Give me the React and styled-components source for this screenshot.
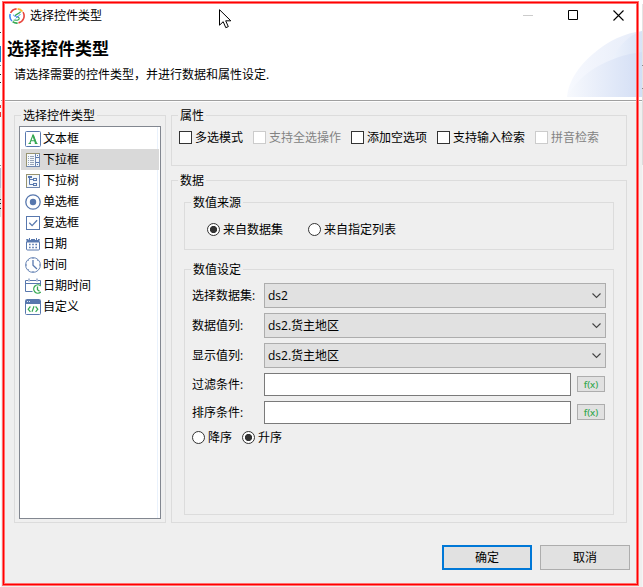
import React from "react";
import styled, { createGlobalStyle, css } from "styled-components";

const Global = createGlobalStyle`
  * { box-sizing: border-box; }
  body {
    margin: 0;
    background: #f0f0f0;
    overflow: hidden;
    font: 12px/16px "Open Sans", "Noto Sans CJK SC", sans-serif;
    color: #000;
  }
`;

const Page = styled.div`
  position: relative;
  width: 643px;
  height: 587px;
  display: grid;
  grid-template-columns: 1px 641px 1px;
  background: #efefef;
`;

const LeftEdge = styled.div`
  height: 587px;
  background: linear-gradient(
    #fff 32px, #333 32px 33px, #fff 33px 46px, #1887c9 46px 62px, #fff 62px 65px,
    #777 65px 66px, #fff 66px 74px, #222 74px 75px, #fff 75px 82px, #222 82px 83px,
    #fff 83px 105px, #e33 105px 108px, #fff 108px 112px, #e33 112px 117px, #fff 117px 165px,
    #888 165px 166px, #fff 166px 168px, #b5bcd0 168px 188px, #ddd 188px 199px, #222 199px 200px,
    #ddd 200px 203px, #222 203px 204px, #ddd 204px 208px, #222 208px 209px, #ddd 209px 217px, #fff 217px
  );
`;

const RightEdge = styled.div`
  height: 587px;
  background: linear-gradient(
    #fff 4px, #e4e4e4 4px 65px, #888 65px 66px, #e4e4e4 66px 88px, #888 88px 89px,
    #dcdcdc 89px 165px, #f5f5f5 165px
  );
`;

const Dialog = styled.div`
  display: flex;
  flex-direction: column;
  height: 587px;
`;

const Header = styled.header`
  display: grid;
  grid-template-columns: 1fr 75px;
  grid-template-rows: 31px 66px;
  height: 102px;
  flex: none;
  background: #fff;
  border-bottom: 1px solid #fdfdfd;
  box-shadow: inset 0 -1px 0 #a0a0a0;
`;

const TitleBar = styled.div`
  grid-column: 1 / -1;
  display: flex;
  align-items: center;
  padding: 0 18px 0 8px;
`;

const Caption = styled.span`
  flex: 1;
  margin-left: 5px;
`;

const Controls = styled.div`
  display: flex;
  align-items: center;
  gap: 34px;

  svg { display: block; }
`;

const Intro = styled.div`
  padding: 7px 0 0 6px;
`;

const Heading = styled.h1`
  margin: 0;
  font-size: 17px;
  line-height: 22px;
  font-weight: 700;
`;

const Hint = styled.p`
  margin: 7px 0 0 7px;
`;

const Content = styled.main`
  display: grid;
  grid-template-columns: 152px 456px;
  column-gap: 5px;
  height: 408px;
  margin: 13px 0 0 13px;
`;

const RightColumn = styled.div`
  display: grid;
  grid-template-rows: 51px 343px;
  row-gap: 14px;
`;

const Group = styled.section`
  border: 1px solid #dcdcdc;
  padding: ${(p) => p.$pad || "0"};
  height: ${(p) => p.$height || "auto"};
  margin: ${(p) => p.$margin || "0"};
`;

const Legend = styled.h2`
  width: max-content;
  height: 16px;
  margin: -8px 0 -1px ${(p) => p.$left || 2}px;
  padding: 0 2px;
  background: #efefef;
  font: inherit;
`;

const List = styled.ul`
  list-style: none;
  height: 393px;
  width: 142px;
  margin: 3px 0 0;
  padding: 1px;
  background: #fff;
  border: 1px solid #828790;
  box-shadow: inset -2px 0 0 #fff, inset -3px 0 0 #eaf2fc;
`;

const Item = styled.li`
  display: flex;
  align-items: center;
  gap: 2px;
  height: 21px;
  width: 138px;
  padding-left: 4px;
  background: ${(p) => (p.$selected ? "#d9d9d9" : "transparent")};

  svg { display: block; flex: none; }
`;

const OptionRow = styled.div`
  display: flex;
  align-items: center;
  gap: ${(p) => p.$gap}px;
  height: 16px;
  margin: ${(p) => p.$margin};
`;

const Option = styled.label`
  display: flex;
  align-items: center;
  gap: 3px;
  white-space: nowrap;
  color: ${(p) => (p.$disabled ? "#838383" : "#000")};
`;

const Box = styled.span`
  width: 13px;
  height: 13px;
  margin-bottom: 1px;
  background: #fff;
  border: 1px solid ${(p) => (p.$disabled ? "#ccc" : "#333")};
`;

const Dot = styled.span`
  width: 13px;
  height: 13px;
  margin-bottom: 1px;
  border-radius: 50%;
  background: #fff;
  border: 1px solid #333;
  ${(p) => p.$on && css`
    background: radial-gradient(circle, #333 3.2px, #fff 4px);
  `}
`;

const Fields = styled.div`
  display: grid;
  grid-template-columns: 72px 307px 28px;
  grid-template-rows: 25px 25px 25px 23px 23px;
  row-gap: 5px;
  column-gap: 0;
  align-items: center;
  margin: 6px 0 0 7px;
`;

const Select = styled.div`
  grid-column: 2 / -1;
  display: flex;
  align-items: center;
  justify-content: space-between;
  width: 342px;
  height: 25px;
  padding: 0 4px 0 3px;
  background: #e1e1e1;
  border: 1px solid #adadad;
`;

const Input = styled.input`
  width: 307px;
  height: 23px;
  padding: 0 4px;
  border: 1px solid #7a7a7a;
  background: #fff;
  outline: 0;
  font: inherit;
`;

const FxButton = styled.button`
  width: 28px;
  height: 16px;
  margin: 0 0 1px 6px;
  padding: 0;
  border: 1px solid #adadad;
  background: #e1e1e1;
  color: #36a852;
  font: 500 9.5px/13px "Noto Sans", sans-serif;
`;

const Footer = styled.footer`
  display: flex;
  justify-content: flex-end;
  gap: 8px;
  margin: 22px 12px 0 0;
`;

const Button = styled.button`
  width: 90px;
  height: 25px;
  padding: 0;
  background: #e1e1e1;
  border: ${(p) => (p.$primary ? "2px solid #0078d7" : "1px solid #adadad")};
  color: #000;
  font: inherit;
`;

const Frame = styled.div`
  position: absolute;
  left: 2px;
  top: 1px;
  width: 637px;
  height: 585px;
  border: 1px solid #ff7070;
  pointer-events: none;

  &::before {
    content: "";
    display: block;
    box-sizing: border-box;
    height: 583px;
    border: 1px solid #f00;
    box-shadow: inset 0 0 0 1px #ff7070;
  }
`;

const Pointer = styled.svg`
  position: absolute;
  left: 219px;
  top: 9px;
`;

const Icon = ({ children }) => (
  <svg width="16" height="16" viewBox="0 0 16 16" fill="none" stroke="#5878ae" strokeWidth="1">
    {children}
  </svg>
);

const Logo = () => (
  <svg width="16" height="16" viewBox="0 0 16 16" fill="none" strokeWidth="1.6">
    <path d="M1.6 5A7.1 7.1 0 0 1 7.6 .9" stroke="#e8453c" />
    <path d="M8.6 .9A7.1 7.1 0 0 1 13.5 3.5" stroke="#f9bb2d" />
    <path d="M14 4.2A7.1 7.1 0 0 1 9.5 14.9" stroke="#e8453c" />
    <path d="M8.6 15.1A7.1 7.1 0 0 1 3.6 13.6" stroke="#34a853" />
    <path d="M3 13A7.1 7.1 0 0 1 1.2 6" stroke="#4285f4" />
    <path d="M11.6 3.6C10.2 6.2 6.6 5.6 6 8.2" stroke="#34a853" strokeWidth="1.2" />
    <path d="M8.2 8.6c2.2.4 2.8 2.6.8 3.4-1.8.7-3.4-.6-4.4.4" stroke="#34a853" strokeWidth="1.1" />
    <path d="M4.6 6.6c-.8 2 3 1.6 4 2.6M6.8 10.4c1.2-2.4 3.6-2 4.6-4.4" stroke="#4285f4" strokeWidth=".9" />
  </svg>
);

const icons = {
  text: (
    <Icon>
      <rect x=".5" y=".5" width="15" height="15" rx="1" fill="#fff" />
      <path d="M4.7 12.5 8 4l3.3 8.5M5.8 9.7h4.5M3.5 12.5H6M9.8 12.5h2.7" stroke="#36a852" strokeWidth="1.1" />
      <path d="m8 4 3 8.5" stroke="#36a852" strokeWidth="1.8" />
    </Icon>
  ),
  select: (
    <Icon>
      <rect x="1.5" y="1.5" width="13" height="13" fill="#f4f8fb" stroke="#99946f" />
      <path d="M1.5 14.5h13v-13M10.5 1.5v13" stroke="#6f88b2" />
      <path d="M3 4.5h1M3 6.5h1M3 8.5h1M3 10.5h1M3 12.5h1M5 4.5h4M5 6.5h4M5 8.5h4M5 10.5h4M5 12.5h4" stroke="#98a5b8" />
      <path d="M11 5.5h3M11 10.5h3M12 3.5h1M12 12.5h1" />
    </Icon>
  ),
  tree: (
    <Icon>
      <rect x="1.5" y="1.5" width="13" height="13" fill="#f4f8fb" stroke="#99946f" />
      <path d="M1.5 14.5h13v-13" stroke="#6f88b2" />
      <path d="M4.5 5v6.5H8M5 6.5h3" />
      <rect x="3.5" y="3.5" width="3" height="1" fill="#5878ae" />
      <rect x="8.5" y="5.5" width="3" height="2" />
      <rect x="8.5" y="10.5" width="3" height="2" />
    </Icon>
  ),
  radio: (
    <Icon>
      <circle cx="8" cy="8" r="7.2" fill="#fff" strokeWidth="1.3" />
      <circle cx="8" cy="8" r="3.2" fill="#5878ae" stroke="none" />
    </Icon>
  ),
  check: (
    <Icon>
      <rect x="1.5" y="1.5" width="13" height="13" fill="#fff" />
      <path d="m4.3 7.8 2.8 2.8 5-5.4" strokeWidth="1.3" />
    </Icon>
  ),
  date: (
    <Icon>
      <path d="M1.5 6h13v7q0 1-1 1h-11q-1 0-1-1z" />
      <path d="M1.5 5h13" strokeWidth="2" />
      <path d="M4.5 2v3M11.5 2v3M1.5 4V3.5h2M6 3.5h4M13 3.5h1.5V4" />
      <path d="M4 8.5h9M4 11.5h9" strokeWidth="1.4" strokeDasharray="1.6 1.6" />
    </Icon>
  ),
  time: (
    <Icon>
      <circle cx="8" cy="8" r="7.4" strokeWidth=".9" />
      <path d="M8 3v5.3l4 3.7" strokeWidth="1.3" />
      <path d="M8 1v1M8 14v1M1 8h1M14 8h1M3 3l.6.6M13 3l-.6.6M3 13l.6-.6" />
    </Icon>
  ),
  datetime: (
    <Icon>
      <path d="M7.5 13.5h-7v-11H3M5 2.5h6M13 2.5h2.5V7M.5 5.5h15M4 .5v3M12 .5v3" />
      <path d="M15.8 7.9a4.2 4.2 0 1 0 0 6.2M12.5 8.5v3.2l2 1.5" stroke="#36a852" strokeWidth="1.3" />
    </Icon>
  ),
  custom: (
    <Icon>
      <rect x=".5" y=".5" width="15" height="15" rx="1" fill="#fff" />
      <path d="M1 1h14v4H1z" fill="#5878ae" stroke="none" />
      <path d="M2 2.5h1M4 2.5h1" stroke="#dbe6f5" />
      <path d="m5.4 7.5-2.2 2.7 2.2 2.6M10.6 7.5l2.2 2.7-2.2 2.6M9 7.3l-2 5.5" stroke="#36a852" strokeWidth="1.2" />
    </Icon>
  ),
};

const types = [
  ["text", "文本框"],
  ["select", "下拉框"],
  ["tree", "下拉树"],
  ["radio", "单选框"],
  ["check", "复选框"],
  ["date", "日期"],
  ["time", "时间"],
  ["datetime", "日期时间"],
  ["custom", "自定义"],
];

const attributes = [
  ["多选模式", false],
  ["支持全选操作", true],
  ["添加空选项", false],
  ["支持输入检索", false],
  ["拼音检索", true],
];

const selects = [
  ["选择数据集:", "ds2"],
  ["数据值列:", "ds2.货主地区"],
  ["显示值列:", "ds2.货主地区"],
];

const Banner = () => (
  <svg width="75" height="66" viewBox="0 0 75 66">
    <defs>
      <linearGradient id="wave">
        <stop offset="0" stopColor="#f7f9fe" />
        <stop offset="1" stopColor="#e6ecf9" />
      </linearGradient>
      <linearGradient id="waveSide">
        <stop offset="0" stopColor="#eef3fc" />
        <stop offset="1" stopColor="#d9e3f6" />
      </linearGradient>
      <linearGradient id="waveFront">
        <stop offset="0" stopColor="#f7f9fd" />
        <stop offset="1" stopColor="#d3def5" />
      </linearGradient>
    </defs>
    <path d="M0 66C2 36 42 3 75 0v66z" fill="url(#wave)" />
    <path d="M44 30C50 17 61 4 75 0v32z" fill="url(#waveSide)" />
    <path d="M0 66C12 42 42 25 75 21v45z" fill="url(#waveFront)" />
  </svg>
);

const RadioOption = ({ label, on }) => (
  <Option>
    <Dot $on={on} />
    {label}
  </Option>
);

export default function App() {
  return (
    <Page>
      <Global />
      <LeftEdge />
      <Dialog>
        <Header>
          <TitleBar>
            <Logo />
            <Caption>选择控件类型</Caption>
            <Controls>
              <svg width="11" height="11"><path d="M0 5.5h10" stroke="#ccc" /></svg>
              <svg width="11" height="11"><path d="M.5 .5h9v9h-9z" fill="none" stroke="#000" /></svg>
              <svg width="11" height="11"><path d="m.5.5 10 10m0-10-10 10" stroke="#000" strokeWidth="1.1" /></svg>
            </Controls>
          </TitleBar>
          <Intro>
            <Heading>选择控件类型</Heading>
            <Hint>请选择需要的控件类型，并进行数据和属性设定.</Hint>
          </Intro>
          <Banner />
        </Header>
        <Content>
          <Group $pad="0 4px">
            <Legend>选择控件类型</Legend>
            <List>
              {types.map(([icon, name]) => (
                <Item key={icon} $selected={icon === "select"}>
                  {icons[icon]}
                  {name}
                </Item>
              ))}
            </List>
          </Group>
          <RightColumn>
            <Group>
              <Legend $left={6}>属性</Legend>
              <OptionRow $gap={10} $margin="7px 0 0 7px">
                {attributes.map(([label, disabled]) => (
                  <Option key={label} $disabled={disabled}>
                    <Box $disabled={disabled} />
                    {label}
                  </Option>
                ))}
              </OptionRow>
            </Group>
            <Group $pad="0 12px">
              <Legend $left={-6}>数据</Legend>
              <Group $height="48px" $margin="14px 0 19px">
                <Legend $left={6}>数值来源</Legend>
                <OptionRow $gap={25} $margin="12px 0 0 22px">
                  <RadioOption label="来自数据集" on />
                  <RadioOption label="来自指定列表" />
                </OptionRow>
              </Group>
              <Group $height="246px">
                <Legend $left={6}>数值设定</Legend>
                <Fields>
                  {selects.map(([label, value]) => (
                    <React.Fragment key={label}>
                      <span>{label}</span>
                      <Select>
                        {value}
                        <svg width="9" height="6">
                          <path d="m.5.5 4 4 4-4" fill="none" stroke="#444" strokeWidth="1.1" />
                        </svg>
                      </Select>
                    </React.Fragment>
                  ))}
                  {["过滤条件:", "排序条件:"].map((label) => (
                    <React.Fragment key={label}>
                      <span>{label}</span>
                      <Input />
                      <FxButton>f(x)</FxButton>
                    </React.Fragment>
                  ))}
                </Fields>
                <OptionRow $gap={10} $margin="6px 0 0 7px">
                  <RadioOption label="降序" />
                  <RadioOption label="升序" on />
                </OptionRow>
              </Group>
            </Group>
          </RightColumn>
        </Content>
        <Footer>
          <Button $primary>确定</Button>
          <Button>取消</Button>
        </Footer>
      </Dialog>
      <RightEdge />
      <Frame />
      <Pointer width="13" height="20" viewBox="0 0 13 20">
        <path d="M.5.7v15.5l3.7-3.5 2.6 6 2.5-1.1-2.6-5.8h5.1z" fill="#fff" stroke="#000" strokeWidth="1" />
      </Pointer>
    </Page>
  );
}
